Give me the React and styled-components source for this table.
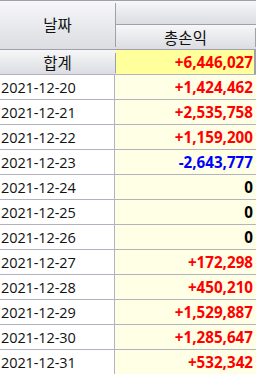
import React from "react";
import styled, { createGlobalStyle } from "styled-components";

const Global = createGlobalStyle`
  html, body { margin: 0; padding: 0; background: #ffffff; }
  body { font-family: "Open Sans", "Noto Sans CJK KR", sans-serif; }
`;

const HEAD_LINE = "#9fa0aa";
const GRID_LINE = "#b2b2c0";
const HEAD_BG = "linear-gradient(to bottom, #f7f7f9 0%, #e9eaed 50%, #dcdde2 100%)";

const Table = styled.div`
  width: 256px;
  display: flex;
  flex-direction: column;
  color: #111111;
`;

const Header = styled.div`
  display: flex;
  height: 48px;
  border-top: 1px solid ${HEAD_LINE};
  border-bottom: 1px solid ${HEAD_LINE};
  background: ${HEAD_BG};
`;

const HeadCell = styled.div`
  width: 115px;
  display: flex;
  align-items: center;
  justify-content: center;
  font-size: 15.5px;
  padding-bottom: 1px;
  box-sizing: border-box;
`;

const Sep = styled.div`
  width: 1px;
  flex: none;
  background: ${HEAD_LINE};
  margin: ${(p) => p.$top ?? 2}px 0 ${(p) => p.$bottom ?? 2}px 0;
`;

const HeadGroup = styled.div`
  flex: 1;
  display: flex;
  flex-direction: column;
`;

const GroupTop = styled.div`
  height: 23px;
  background: ${HEAD_BG};
  border-bottom: 1px solid ${HEAD_LINE};
`;

const GroupBottom = styled.div`
  flex: 1;
  display: flex;
  background: ${HEAD_BG};
`;

const GroupLabel = styled.div`
  flex: 1;
  display: flex;
  align-items: center;
  justify-content: center;
  font-size: 15.5px;
  padding-top: 1px;
`;

const Row = styled.div`
  display: flex;
  height: 24px;
  border-bottom: 1px solid ${GRID_LINE};
`;

const TotalLabel = styled.div`
  width: 115px;
  display: flex;
  align-items: center;
  justify-content: center;
  font-size: 15.5px;
  background: ${HEAD_BG};
`;

const TotalSepWrap = styled.div`
  display: flex;
  background: ${HEAD_BG};
`;

const DateCell = styled.div`
  width: 115px;
  flex: none;
  box-sizing: border-box;
  border-right: 1px solid ${GRID_LINE};
  background: #ffffff;
  display: flex;
  align-items: center;
  padding-left: 1px;
  font-size: 14.5px;
  letter-spacing: -0.1px;
`;

const ValueCell = styled.div`
  flex: 1;
  display: flex;
  align-items: center;
  justify-content: flex-end;
  padding-right: ${(p) => (p.$total ? 1 : 3)}px;
  background: ${(p) => (p.$total ? "#ffff9c" : "#ffffe6")};
  border-right: ${(p) => (p.$total ? `2px solid ${HEAD_LINE}` : "none")};
  font-size: 15.2px;
  font-weight: 700;
  color: ${(p) => (p.$sign > 0 ? "#ff0000" : p.$sign < 0 ? "#0000ff" : "#000000")};
`;

const data = [
  ["2021-12-20", 1424462],
  ["2021-12-21", 2535758],
  ["2021-12-22", 1159200],
  ["2021-12-23", -2643777],
  ["2021-12-24", 0],
  ["2021-12-25", 0],
  ["2021-12-26", 0],
  ["2021-12-27", 172298],
  ["2021-12-28", 450210],
  ["2021-12-29", 1529887],
  ["2021-12-30", 1285647],
  ["2021-12-31", 532342],
];

const fmt = (v) => {
  if (v === 0) return "0";
  const s = Math.abs(v).toLocaleString("en-US");
  return (v > 0 ? "+" : "-") + s;
};

const total = 6446027;

export default function App() {
  return (
    <>
      <Global />
      <Table>
        <Header>
          <HeadCell>날짜</HeadCell>
          <Sep $top={2} $bottom={2} />
          <HeadGroup>
            <GroupTop />
            <GroupBottom>
              <GroupLabel>총손익</GroupLabel>
              <Sep $top={3} $bottom={2} />
            </GroupBottom>
          </HeadGroup>
        </Header>
        <Row>
          <TotalLabel>합계</TotalLabel>
          <TotalSepWrap>
            <Sep $top={3} $bottom={1} />
          </TotalSepWrap>
          <ValueCell $total $sign={Math.sign(total)}>
            {fmt(total)}
          </ValueCell>
        </Row>
        {data.map(([d, v]) => (
          <Row key={d}>
            <DateCell>{d}</DateCell>
            <ValueCell $sign={Math.sign(v)}>{fmt(v)}</ValueCell>
          </Row>
        ))}
      </Table>
    </>
  );
}
